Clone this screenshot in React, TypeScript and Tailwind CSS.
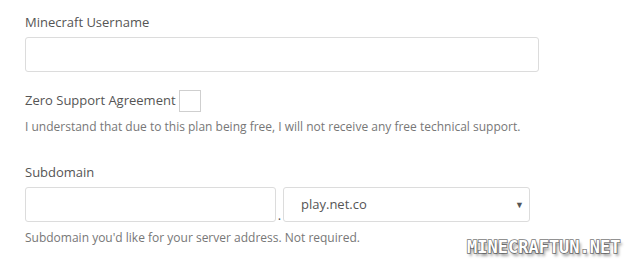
import React from 'react';

export default function App() {
  return (
    <div className="w-[631px] h-[261px] bg-white relative overflow-hidden" style={{ fontFamily: '"Open Sans", sans-serif' }}>
      <div className="pl-[25px] pt-[13px]">
        {/* Username */}
        <label className="block text-[13px] leading-[18px] text-[#555]">Minecraft Username</label>
        <input className="block mt-[6px] w-[514px] h-[35px] border border-[#dcdcdc] rounded-[3px] outline-none" />

        {/* Agreement */}
        <div className="flex items-center mt-[18px] h-[22px]">
          <span className="text-[13px] text-[#555]">Zero Support Agreement</span>
          <span className="ml-[3px] w-[22px] h-[22px] border border-[#cfcfcf] bg-white" />
        </div>
        <p className="mt-[7px] text-[12px] leading-[16px] text-[#777]">
          I understand that due to this plan being free, I will not receive any free technical support.
        </p>

        {/* Subdomain */}
        <label className="block mt-[28px] text-[13px] leading-[18px] text-[#555]">Subdomain</label>
        <div className="flex items-end mt-[6px]">
          <input className="block w-[251px] h-[35px] border border-[#dcdcdc] rounded-[3px] outline-none" />
          <span className="w-[7px] text-center text-[13px] leading-[14px] text-[#555]">.</span>
          <div className="flex items-center justify-between w-[247px] h-[35px] border border-[#dcdcdc] rounded-[3px] pl-[17px] pr-[5px]">
            <span className="text-[13px] text-[#555]">play.net.co</span>
            <span className="text-[9px] text-[#555]">▼</span>
          </div>
        </div>
        <p className="mt-[8px] text-[12px] leading-[16px] text-[#777]">
          Subdomain you'd like for your server address. Not required.
        </p>
      </div>

      {/* Watermark */}
      <div
        className="absolute left-[467px] top-[237px] text-[17px] leading-[20px] font-bold text-white"
        style={{
          fontFamily: '"DejaVu Sans Mono", monospace',
          WebkitTextStroke: '1.5px #7a7a7a',
          paintOrder: 'stroke fill',
          textShadow: '2px 3px 3px rgba(0,0,0,0.4)',
        }}
      >
        MINECRAFTUN.NET
      </div>
    </div>
  );
}
